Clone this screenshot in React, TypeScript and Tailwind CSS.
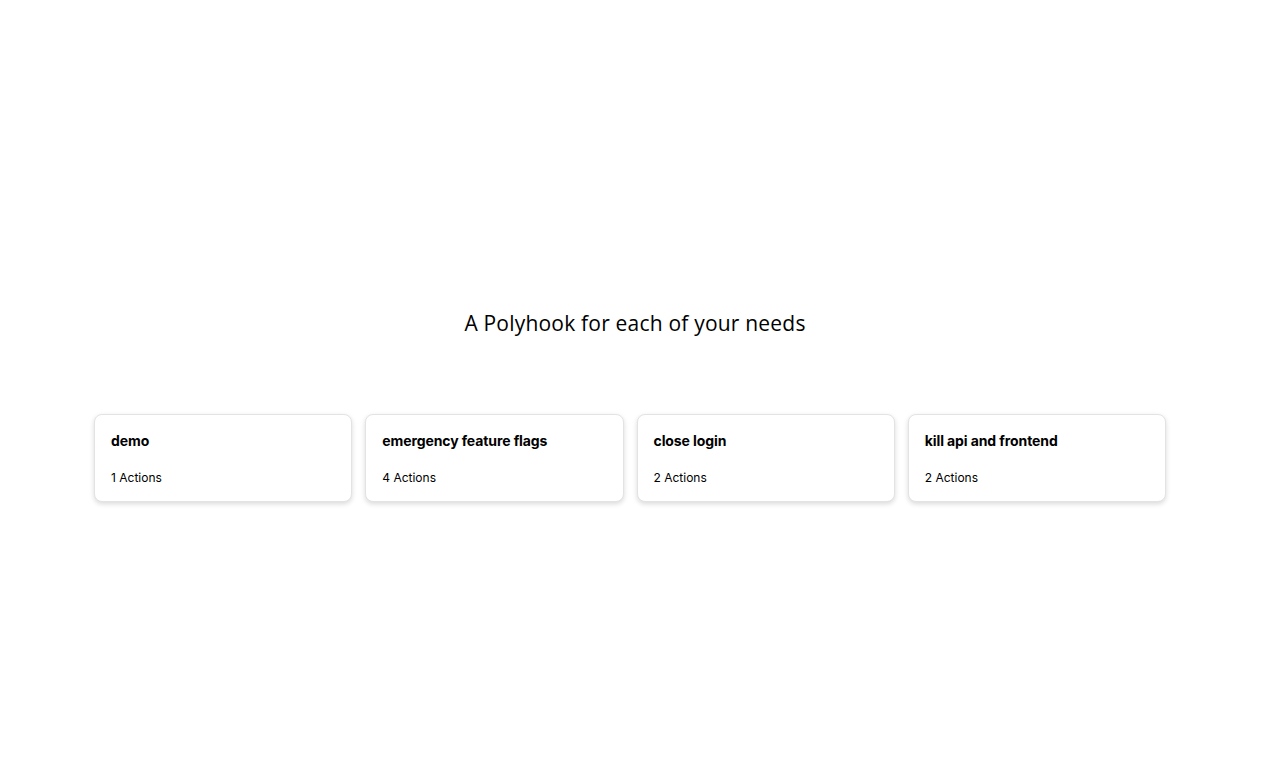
const hooks = [
  { name: "demo", actions: 1 },
  { name: "emergency feature flags", actions: 4 },
  { name: "close login", actions: 2 },
  { name: "kill api and frontend", actions: 2 },
];

export default function App() {
  return (
    <div className="min-h-screen bg-white text-black" style={{ fontFamily: "Inter, 'Liberation Sans', sans-serif" }}>
      <div className="pt-[309px] text-center">
        <h1 className="text-[21px] leading-[28px] font-normal tracking-[0.2px] text-black" style={{ fontFamily: "'Open Sans', 'DejaVu Sans', sans-serif" }}>
          A Polyhook for each of your needs
        </h1>
      </div>

      <div className="mt-[77px] ml-[94px] w-[1072px] grid grid-cols-4 gap-[13px]">
        {hooks.map((hook) => (
          <div
            key={hook.name}
            className="h-[88px] rounded-lg border border-[#e3e3e3] bg-white px-4 pt-[17px] shadow-[0_2px_5px_rgba(0,0,0,0.15)]"
          >
            <div className="text-[14px] leading-[17px] font-bold tracking-[-0.1px]">{hook.name}</div>
            <div className="mt-[21px] text-[12px] leading-[15px]">{hook.actions} Actions</div>
          </div>
        ))}
      </div>
    </div>
  );
}
